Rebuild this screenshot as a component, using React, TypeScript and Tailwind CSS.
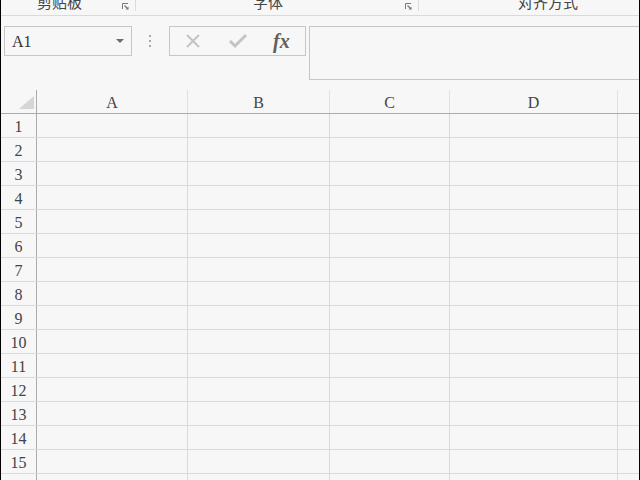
import React from "react";

const serif = { fontFamily: '"Liberation Serif", "Noto Sans CJK SC", serif' };
const cjk = { fontFamily: '"Noto Sans CJK SC", "Noto Sans", sans-serif' };

function Launcher() {
  return (
    <svg width="7" height="7" viewBox="0 0 7 7" className="mt-[3px] shrink-0">
      <path d="M0.5 6V0.5H6" stroke="#7a7a7a" strokeWidth="1" fill="none" />
      <path d="M2.5 2.5L6 6" stroke="#7a7a7a" strokeWidth="1.2" fill="none" />
      <path d="M3.5 6.5H6.5V3.5Z" fill="#7a7a7a" />
    </svg>
  );
}

const cols = [
  { label: "A", w: "w-[151px]" },
  { label: "B", w: "w-[142px]" },
  { label: "C", w: "w-[120px]" },
  { label: "D", w: "w-[168px]" },
];

export default function App() {
  const rows = Array.from({ length: 16 }, (_, i) => i + 1);
  return (
    <div className="w-[640px] h-[480px] overflow-hidden bg-[#f7f7f7] border-x border-black flex flex-col">
      {/* ribbon group labels */}
      <div className="h-[16px] shrink-0 border-b border-[#dadada] flex overflow-hidden">
        <div className="w-[117px] shrink-0 text-center text-[15px] leading-[20px] mt-[-8px] text-[#444]" style={cjk}>
          剪贴板
        </div>
        <div className="ml-[4px]"><Launcher /></div>
        <div className="ml-[6px] w-px h-[11px] bg-[#dcdcdc] shrink-0" />
        <div className="w-[264px] shrink-0 text-center text-[15px] leading-[20px] mt-[-8px] text-[#444]" style={cjk}>
          字体
        </div>
        <div className="ml-[5px]"><Launcher /></div>
        <div className="ml-[6px] w-px h-[11px] bg-[#dcdcdc] shrink-0" />
        <div className="w-[258px] shrink-0 text-center text-[15px] leading-[20px] mt-[-8px] text-[#444]" style={cjk}>
          对齐方式
        </div>
      </div>

      {/* formula bar */}
      <div className="h-[74px] shrink-0 flex items-start pt-[10px]">
        <div className="ml-[3px] w-[128px] h-[30px] border border-[#c6c6c6] flex items-center shrink-0">
          <span className="pl-[7px] pt-[1px] text-[16px] text-[#333] flex-1" style={serif}>A1</span>
          <svg width="8" height="4" viewBox="0 0 8 4" className="mr-[7px]">
            <path d="M0 0H8L4 4Z" fill="#6b6b6b" />
          </svg>
        </div>
        <div className="ml-[17px] mt-[9px] flex flex-col gap-[3px] shrink-0">
          <div className="w-[2px] h-[2px] bg-[#a8a8a8]" />
          <div className="w-[2px] h-[2px] bg-[#a8a8a8]" />
          <div className="w-[2px] h-[2px] bg-[#a8a8a8]" />
        </div>
        <div className="ml-[18px] w-[137px] h-[30px] border border-[#c6c6c6] flex items-center shrink-0">
          <svg width="16" height="16" viewBox="0 0 16 16" className="ml-[15px]">
            <path d="M2 2L14 14M14 2L2 14" stroke="#c4c4c4" strokeWidth="2" fill="none" />
          </svg>
          <svg width="20" height="16" viewBox="0 0 20 16" className="ml-[27px]">
            <path d="M2 8L7 13L18 2" stroke="#c4c4c4" strokeWidth="3" fill="none" />
          </svg>
          <span
            className="ml-[25px] text-[20px] italic font-bold text-[#606060] leading-none"
            style={serif}
          >
            fx
          </span>
        </div>
        <div className="ml-[3px] flex-1 h-[54px] border border-r-0 border-[#c6c6c6]" />
      </div>

      {/* column headers */}
      <div className="h-[24px] shrink-0 flex border-b border-[#ababab]">
        <div className="w-[36px] shrink-0 border-r border-[#ababab] flex items-end justify-end pr-[2px] pb-[4px]">
          <svg width="15" height="13" viewBox="0 0 15 13">
            <path d="M15 0V13H0Z" fill="#d6d6d6" />
          </svg>
        </div>
        {cols.map((c) => (
          <div
            key={c.label}
            className={`${c.w} shrink-0 border-r border-[#e0e0e0] flex items-center justify-center text-[16px] text-[#444] pt-[2px]`}
            style={serif}
          >
            {c.label}
          </div>
        ))}
        <div className="flex-1" />
      </div>

      {/* rows */}
      {rows.map((r) => (
        <div key={r} className="h-[24px] shrink-0 flex border-b border-[#dadada]">
          <div
            className="w-[36px] shrink-0 border-r border-[#ababab] flex items-center justify-center text-[16px] text-[#444] pt-[3px]"
            style={serif}
          >
            {r}
          </div>
          {cols.map((c) => (
            <div key={c.label} className={`${c.w} shrink-0 border-r border-[#dadada]`} />
          ))}
          <div className="flex-1" />
        </div>
      ))}
    </div>
  );
}
